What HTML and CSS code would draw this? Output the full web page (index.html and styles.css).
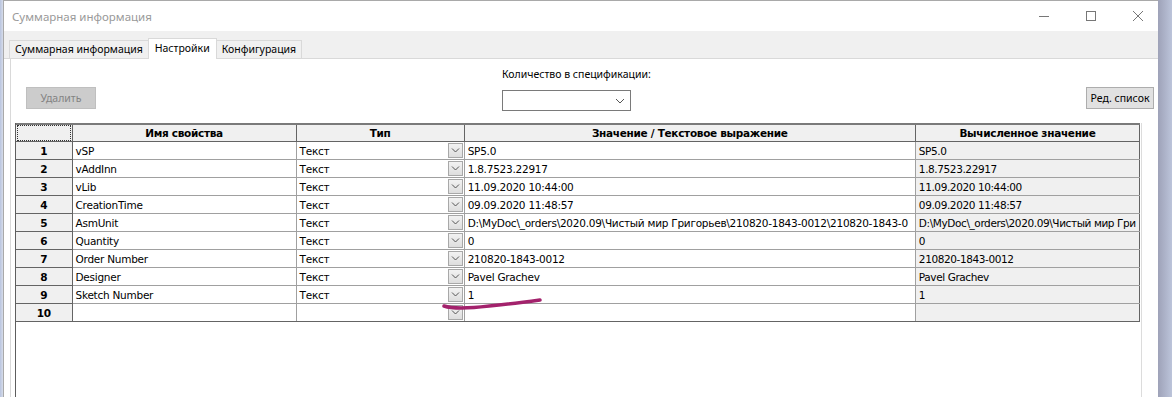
FILE: index.html
```html
<!DOCTYPE html>
<html lang="ru">
<head>
    <meta charset="UTF-8">
    <title>Суммарная информация</title>
    <link rel="stylesheet" href="styles.css">
</head>
<body>
    <div class="desk-left"></div>
    <div class="window">
        <div class="titlebar">
            <span class="title">Суммарная информация</span>
            <div class="controls">
                <svg class="ctl" width="12" height="12" viewBox="0 0 12 12"><path d="M1 6.5h10" stroke="#777" stroke-width="1"/></svg>
                <svg class="ctl" width="12" height="12" viewBox="0 0 12 12"><rect x="1.5" y="1.5" width="9" height="9" fill="none" stroke="#777" stroke-width="1"/></svg>
                <svg class="ctl" width="12" height="12" viewBox="0 0 12 12"><path d="M1 1l10 10M11 1L1 11" stroke="#777" stroke-width="1"/></svg>
            </div>
        </div>

        <div class="tabstrip">
            <div class="tab">Суммарная информация</div>
            <div class="tab active">Настройки</div>
            <div class="tab">Конфигурация</div>
        </div>

        <div class="panel">
            <div class="toolbar">
                <button class="btn disabled">Удалить</button>
                <div class="qty">
                    <label>Количество в спецификации:</label>
                    <div class="combo">
                        <svg width="10" height="6" viewBox="0 0 10 6"><path d="M1 1l4 4 4-4" fill="none" stroke="#555" stroke-width="1"/></svg>
                    </div>
                </div>
                <button class="btn">Ред. список</button>
            </div>

            <div class="grid-wrap">
                <table class="grid">
                    <colgroup>
                        <col class="c-num">
                        <col class="c-name">
                        <col class="c-type">
                        <col class="c-val">
                        <col class="c-calc">
                    </colgroup>
                    <thead>
                        <tr>
                            <th class="corner"></th>
                            <th>Имя свойства</th>
                            <th>Тип</th>
                            <th>Значение / Текстовое выражение</th>
                            <th>Вычисленное значение</th>
                        </tr>
                    </thead>
                    <tbody id="rows"></tbody>
                </table>
            </div>
        </div>

        <svg class="mark" width="120" height="20" viewBox="0 0 120 20">
            <path d="M4 10 C 16 14, 40 12, 100 4" fill="none" stroke="#a3226c" stroke-width="3.5" stroke-linecap="round"/>
        </svg>
    </div>
    <div class="desk-right"></div>

    <script>
        // cell text as far as the grid shows it
        const rows = [
            ['vSP', 'SP5.0', 'SP5.0'],
            ['vAddInn', '1.8.7523.22917', '1.8.7523.22917'],
            ['vLib', '11.09.2020 10:44:00', '11.09.2020 10:44:00'],
            ['CreationTime', '09.09.2020 11:48:57', '09.09.2020 11:48:57'],
            ['AsmUnit', 'D:\\MyDoc\\_orders\\2020.09\\Чистый мир Григорьев\\210820-1843-0012\\210820-1843-0', 'D:\\MyDoc\\_orders\\2020.09\\Чистый мир Гри'],
            ['Quantity', '0', '0'],
            ['Order Number', '210820-1843-0012', '210820-1843-0012'],
            ['Designer', 'Pavel Grachev', 'Pavel Grachev'],
            ['Sketch Number', '1', '1'],
            ['', '', '']
        ];

        const arrow = '<span class="dd"><svg width="9" height="5" viewBox="0 0 9 5"><path d="M1 0.5l3.5 3.5 3.5-3.5" fill="none" stroke="#555" stroke-width="1"/></svg></span>';

        document.getElementById('rows').innerHTML = rows.map((r, i) => `
            <tr>
                <td class="num">${i + 1}</td>
                <td>${r[0]}</td>
                <td class="type"><span class="txt">${r[0] ? 'Текст' : ''}</span>${arrow}</td>
                <td>${r[1]}</td>
                <td class="calc">${r[2]}</td>
            </tr>
        `).join('');
    </script>
</body>
</html>
```

FILE: styles.css
```css
html, body {
    margin: 0;
    height: 100%;
    overflow: hidden;
}
body {
    display: flex;
    background: #c4cbe0;
    font-family: "Noto Sans", "Liberation Sans", sans-serif;
}
.desk-left {
    width: 3px;
    background: linear-gradient(to right, #b9c4de, #d6dcea);
}
.desk-right {
    width: 14px;
    background: linear-gradient(to right, #9ea2b8, #bcc4da);
}
.window {
    position: relative;
    flex: 1;
    display: flex;
    flex-direction: column;
    background: #fff;
    border-left: 1px solid #a9a9a9;
    border-top: 1px solid #a9a9a9;
}
.titlebar {
    height: 30px;
    display: flex;
    align-items: center;
    justify-content: space-between;
    background: #fff;
}
.title {
    margin-left: 8px;
    font-size: 11.5px;
    color: #9a9a9a;
}
.controls {
    display: flex;
    gap: 35px;
    margin-right: 14px;
}
.tabstrip {
    height: 27px;
    background: #f0f0f0;
    display: flex;
    align-items: flex-end;
    padding-left: 6px;
    border-bottom: 1px solid #d9d9d9;
}
.tab {
    height: 17px;
    padding: 0 5px;
    font-size: 10.5px;
    line-height: 17px;
    color: #000;
    background: #f0f0f0;
    border: 1px solid #d9d9d9;
    border-bottom: none;
    margin-left: -1px;
}
.tab.active {
    height: 20px;
    background: #fff;
    position: relative;
    top: 1px;
    line-height: 18px;
    padding: 0 6px;
}
.panel {
    flex: 1;
    margin-left: 6px;
    border-left: 1px solid #d9d9d9;
    display: flex;
    flex-direction: column;
}
.toolbar {
    height: 64px;
    display: flex;
    align-items: flex-start;
}
.btn {
    margin-top: 28px;
    height: 22px;
    font-family: inherit;
    font-size: 10.5px;
    padding: 0 3px;
    background: #e1e1e1;
    border: 1px solid #adadad;
    color: #000;
}
.btn.disabled {
    margin-left: 15px;
    width: 70px;
    background: #cccccc;
    border-color: #bfbfbf;
    color: #838383;
}
.qty {
    margin-left: 406px;
    margin-top: 8px;
    display: flex;
    flex-direction: column;
}
.qty label {
    font-size: 10.5px;
    height: 18px;
}
.combo {
    margin-top: 5px;
    width: 122px;
    height: 19px;
    border: 1px solid #7a7a7a;
    background: #fff;
    display: flex;
    align-items: center;
    justify-content: flex-end;
    padding-right: 5px;
    box-sizing: content-box;
}
.qty + .btn {
    margin-left: auto;
    margin-right: 4px;
    width: 68px;
    padding: 0;
}
.grid-wrap {
    flex: 1;
    margin-left: 4px;
    width: 1125px;
    border-left: 1px solid #5e5e5e;
    border-right: 1px solid #dcdcdc;
}
.grid {
    border-collapse: collapse;
    table-layout: fixed;
    width: 1124px;
    font-family: "DejaVu Sans", Verdana, sans-serif;
    font-size: 10.5px;
    letter-spacing: -0.25px;
}
.c-num { width: 56px; }
.c-name { width: 224px; }
.c-type { width: 168px; }
.c-val { width: 451px; }
.c-calc { width: 224px; }
.grid th {
    height: 16px;
    background: #f0f0f0;
    border: 1px solid #646464;
    border-top: 2px solid #7a7a7a;
    font-weight: bold;
    padding: 0;
    letter-spacing: -0.3px;
}
.grid th.corner {
    border-left: none;
    outline: 1px dotted #333;
    outline-offset: -2px;
}
.grid td {
    height: 17px;
    padding: 0 0 0 3px;
    border: 1px solid #a0a0a0;
    white-space: nowrap;
    overflow: hidden;
}
.grid td.num {
    background: #f0f0f0;
    text-align: center;
    font-weight: bold;
    border-left: none;
    border-right: 1px solid #646464;
    border-bottom: 1px solid #646464;
    padding: 0;
}
.grid tr:last-child td {
    border-bottom: 1px solid #646464;
}
.grid td.calc {
    background: #f0f0f0;
    border-right: 1px solid #646464;
    letter-spacing: -0.4px;
}
.grid td.type {
    padding-right: 0;
}
.type {
    position: relative;
}
.dd {
    position: absolute;
    right: 1px;
    top: 1px;
    width: 15px;
    height: 15px;
    background: linear-gradient(#f2f2f2, #dedede);
    border: 1px solid #a8a8a8;
    box-sizing: border-box;
    display: flex;
    align-items: center;
    justify-content: center;
}
.mark {
    position: absolute;
    left: 436px;
    top: 295px;
}
```
